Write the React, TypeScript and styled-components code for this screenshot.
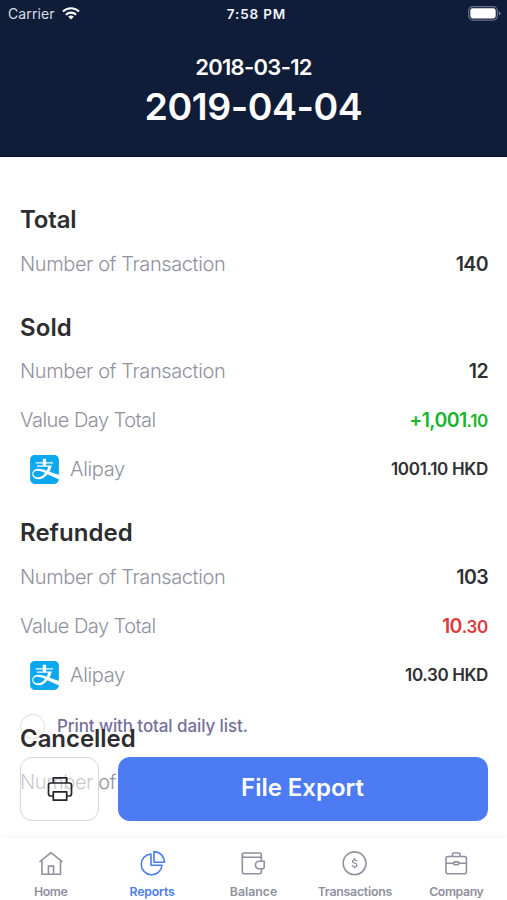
import React from 'react';
import styled, { createGlobalStyle, css } from 'styled-components';
import { SiAlipay } from 'react-icons/si';

const GlobalStyle = createGlobalStyle`
  * { box-sizing: border-box; }
  body { margin: 0; background: #fff; }
  button { font: inherit; padding: 0; border: 0; background: none; }
`;

const Screen = styled.div`
  width: 100%;
  height: 900px;
  display: flex;
  flex-direction: column;
  overflow: hidden;
  background: #fff;
  color: #2d2d2f;
  font-family: Inter, 'Liberation Sans', sans-serif;
  white-space: nowrap;
`;

const Header = styled.header`
  flex: none;
  height: 157px;
  background: #101d39;
  color: #fff;
  border-bottom: 1px solid #08112a;
  text-align: center;
`;

const StatusBar = styled.div`
  display: grid;
  grid-template-columns: 1fr auto 1fr;
  align-items: center;
  height: 27px;
  padding: 0 6px 0 8px;
  font-size: 14px;
  color: #f3f5fa;
`;

const Carrier = styled.div`
  display: flex;
  align-items: center;
  gap: 7px;
  color: #d9dde6;
  letter-spacing: 0.1px;
`;

const Clock = styled.div`
  font-weight: 600;
  font-size: 13.5px;
  letter-spacing: 0.85px;
  padding-left: 4px;
`;

const BatteryIcon = styled.svg`
  justify-self: end;
`;

const FromDate = styled.div`
  margin-top: 26px;
  line-height: 28px;
  font-size: 22px;
  font-weight: 600;
  letter-spacing: -0.7px;
`;

const ToDate = styled.div`
  margin-top: 4px;
  line-height: 44px;
  font-size: 37.5px;
  font-weight: 600;
  letter-spacing: -0.45px;
`;

const Main = styled.main`
  position: relative;
  flex: 1;
  min-height: 0;
`;

const Report = styled.div`
  position: relative;
  z-index: 1;
  height: 100%;
  overflow: hidden;
  padding: 43px 19px 0 20px;
`;

const Section = styled.section`
  & + & { margin-top: 19.5px; }
`;

const SectionTitle = styled.h2<{ $tracking: number }>`
  margin: 0;
  height: 39px;
  line-height: 39px;
  font-size: 24px;
  font-weight: 600;
  letter-spacing: ${(p) => p.$tracking}px;
`;

const Row = styled.div`
  display: flex;
  align-items: center;
  justify-content: space-between;
  height: 49px;
`;

const Label = styled.span<{ $tracking?: number }>`
  display: flex;
  align-items: center;
  font-size: 20px;
  font-weight: 300;
  letter-spacing: ${(p) => p.$tracking ?? -0.39}px;
  color: #9191a0;
`;

const Logo = styled.span`
  display: flex;
  margin: 1px 11px 0 10px;
  border-radius: 5px;
  background: #fff;
  color: #0ba8ef;
`;

const tones = { dark: '#303033', green: '#19b52e', red: '#d93c3f' };

const Value = styled.span<{ $tone?: keyof typeof tones; $small?: boolean; $tracking?: number }>`
  font-size: 19.5px;
  font-weight: 600;
  letter-spacing: ${(p) => p.$tracking ?? -0.6}px;
  color: ${(p) => tones[p.$tone ?? 'dark']};
  ${(p) => p.$small && css`font-size: 17px;`}
`;

const Cents = styled.span`
  font-size: 17px;
  letter-spacing: -0.3px;
`;

const PrintOption = styled.label`
  position: absolute;
  left: 20px;
  bottom: 99px;
  display: flex;
  align-items: center;
  gap: 12px;
  height: 26px;
  font-size: 17px;
  font-weight: 500;
  letter-spacing: -0.1px;
  color: #75709a;
`;

const Circle = styled.span`
  width: 25px;
  height: 25px;
  border: 1px solid #dcdce1;
  border-radius: 50%;
`;

const Actions = styled.div`
  position: absolute;
  z-index: 2;
  left: 20px;
  right: 19px;
  bottom: 17px;
  display: flex;
  gap: 19px;
  height: 64px;
`;

const PrintButton = styled.button`
  display: flex;
  align-items: center;
  justify-content: center;
  width: 79px;
  border: 1px solid #d6d6dc;
  border-radius: 12px;
  background: rgba(255, 255, 255, 0.5);
  color: #252528;
`;

const ExportButton = styled.button`
  flex: 1;
  border-radius: 12px;
  background: #4c7bf3;
  color: #fff;
  font-size: 24px;
  font-weight: 600;
  letter-spacing: -0.02px;
  padding: 0 1px 3px 0;
`;

const TabBar = styled.nav`
  position: relative;
  z-index: 3;
  flex: none;
  display: grid;
  grid-template-columns: repeat(5, 1fr);
  height: 62px;
  background: #fff;
  box-shadow: 0 -2px 5px rgba(0, 0, 0, 0.035);
`;

const Tab = styled.a<{ $active?: boolean; $tracking: number }>`
  display: flex;
  flex-direction: column;
  align-items: center;
  gap: 6px;
  padding-top: 11px;
  font-size: 12.3px;
  line-height: 18px;
  font-weight: 600;
  letter-spacing: ${(p) => p.$tracking}px;
  color: ${(p) => (p.$active ? '#4c7bee' : '#9090a0')};
`;

const TabSvg = styled.svg`
  width: 28px;
  height: 28px;
  fill: none;
  stroke: currentColor;
  stroke-width: 1.6;
  stroke-linejoin: round;
  stroke-linecap: round;
`;

const tabs = [
  {
    name: 'Home',
    tracking: -0.4,
    icon: (
      <>
        <path d="M3 12.5 14 3.7l11 8.8M5 11v14.2h18.5V11" />
        <path d="M11.400 25v-7.900h5.200V25" />
      </>
    ),
  },
  {
    name: 'Reports',
    active: true,
    tracking: -0.2,
    icon: (
      <>
        <path d="M13 5A10.400 10.400 0 1 0 24 16.200H13Z" />
        <path d="M16 2.600v10.700h10.500C26.400 7.500 22 2.800 16 2.600Z" />
      </>
    ),
  },
  {
    name: 'Balance',
    tracking: 0,
    icon: (
      <>
        <path d="M22.300 12V8.200H5.200a2.100 2.100 0 0 1 0-4.200h15.500q1.600 0 1.600 1.600v2.600M3.300 6v16.800q0 2 2 2h15q2 0 2-2v-3" />
        <path d="M25.200 12.200h-5a3.800 3.800 0 0 0 0 7.600h3.500q1.500 0 1.500-1.500Z" />
      </>
    ),
  },
  {
    name: 'Transactions',
    tracking: -0.22,
    icon: (
      <>
        <circle cx="13.6" cy="14.300" r="11.400" />
        <path strokeWidth="1.300" d="M15.800 12c-.3-.9-1.100-1.200-2.200-1.200-1.200 0-2.100.6-2.100 1.600 0 2.300 4.400 1.300 4.400 3.700 0 1.100-1 1.700-2.300 1.700-1.100 0-2-.5-2.300-1.400M13.600 9.500v1.300m0 7v1.300" />
      </>
    ),
  },
  {
    name: 'Company',
    tracking: -0.4,
    icon: (
      <>
        <rect x="4" y="7.500" width="20.400" height="17.200" rx="2" />
        <path d="M10.400 7.300V5.200q0-1.200 1.200-1.200h5.200Q18 4 18 5.200v2.100M4 14.300h7.600m5.200 0h7.600" />
        <rect x="11.600" y="12.900" width="5.200" height="2.800" rx="1.200" />
      </>
    ),
  },
];

const AlipayRow = ({ amount, tracking }: { amount: string; tracking: number }) => (
  <Row>
    <Label $tracking={-0.34}>
      <Logo><SiAlipay size={29} /></Logo>
      Alipay
    </Label>
    <Value $small $tracking={tracking}>{amount}</Value>
  </Row>
);

export default function App() {
  return (
    <Screen>
      <GlobalStyle />
      <Header>
        <StatusBar>
          <Carrier>
            Carrier
            <svg width="18" height="13" viewBox="0 0 18 13" fill="none" stroke="#fff" strokeWidth="2.1">
              <path d="M1 4.600a11.400 11.400 0 0 1 16 0M3.900 7.700a7.300 7.300 0 0 1 10.200 0" />
              <path d="m9 12.600-2.800-2.800a4 4 0 0 1 5.600 0Z" fill="#fff" stroke="none" />
            </svg>
          </Carrier>
          <Clock>7:58 PM</Clock>
          <BatteryIcon width="33" height="15" viewBox="0 0 33 15">
            <rect x=".7" y=".7" width="28.6" height="13.4" rx="4" fill="none" stroke="#69728a" strokeWidth="1.2" />
            <rect x="2.3" y="2.3" width="25.4" height="10.2" rx="2.4" fill="#fff" />
            <path d="M30.800 5.200q1.700.7 1.700 2.200t-1.700 2.200Z" fill="#7a8297" />
          </BatteryIcon>
        </StatusBar>
        <FromDate>2018-03-12</FromDate>
        <ToDate>2019-04-04</ToDate>
      </Header>

      <Main>
        <PrintOption>
          <Circle />
          Print with total daily list.
        </PrintOption>
        <Report>
          <Section>
            <SectionTitle $tracking={-0.15}>Total</SectionTitle>
            <Row><Label>Number of Transaction</Label><Value>140</Value></Row>
          </Section>
          <Section>
            <SectionTitle $tracking={0.1}>Sold</SectionTitle>
            <Row><Label>Number of Transaction</Label><Value>12</Value></Row>
            <Row>
              <Label $tracking={-0.53}>Value Day Total</Label>
              <Value $tone="green">+1,001<Cents>.10</Cents></Value>
            </Row>
            <AlipayRow amount="1001.10 HKD" tracking={-0.3} />
          </Section>
          <Section>
            <SectionTitle $tracking={0.03}>Refunded</SectionTitle>
            <Row><Label>Number of Transaction</Label><Value>103</Value></Row>
            <Row>
              <Label $tracking={-0.53}>Value Day Total</Label>
              <Value $tone="red">10<Cents>.30</Cents></Value>
            </Row>
            <AlipayRow amount="10.30 HKD" tracking={-0.36} />
          </Section>
          <Section>
            <SectionTitle $tracking={-0.05}>Cancelled</SectionTitle>
            <Row><Label>Number of Transaction</Label></Row>
          </Section>
        </Report>
        <Actions>
          <PrintButton aria-label="Print">
            <svg width="26" height="26" viewBox="0 0 26 26" fill="none" stroke="currentColor" strokeWidth="1.7" strokeLinejoin="round">
              <path d="M6.300 7V1.800h13.400V7M6.300 20H3.700Q1.500 20 1.500 17.800V9.200Q1.500 7 3.700 7h18.600q2.200 0 2.200 2.200v8.600q0 2.200-2.200 2.200h-2.600" />
              <path d="M6.300 15.800h13.400v8.400H6.300Z" />
            </svg>
          </PrintButton>
          <ExportButton>File Export</ExportButton>
        </Actions>
      </Main>

      <TabBar>
        {tabs.map((t) => (
          <Tab key={t.name} $active={t.active} $tracking={t.tracking}>
            <TabSvg viewBox="0 0 28 28">{t.icon}</TabSvg>
            {t.name}
          </Tab>
        ))}
      </TabBar>
    </Screen>
  );
}
